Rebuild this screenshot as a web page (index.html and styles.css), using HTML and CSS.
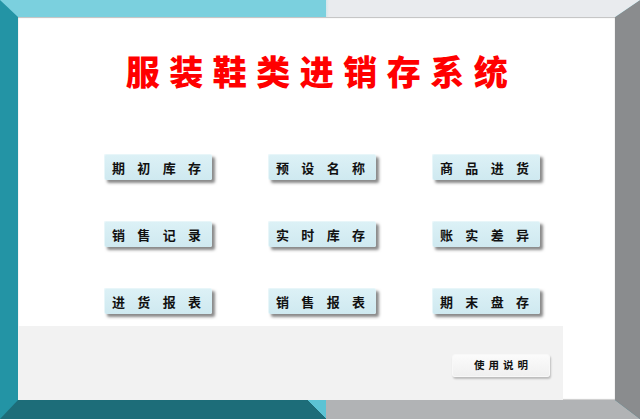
FILE: index.html
```html
<!DOCTYPE html>
<html lang="zh">
<head>
<meta charset="utf-8">
<title>服装鞋类进销存系统</title>
<link rel="stylesheet" href="styles.css">
</head>
<body>
<div class="frame">
  <div class="panel">
    <h1 class="title">服装鞋类进销存系统</h1>
    <div class="menu">
      <button class="btn"><span>期</span><span>初</span><span>库</span><span>存</span></button>
      <button class="btn"><span>预</span><span>设</span><span>名</span><span>称</span></button>
      <button class="btn"><span>商</span><span>品</span><span>进</span><span>货</span></button>
      <button class="btn"><span>销</span><span>售</span><span>记</span><span>录</span></button>
      <button class="btn"><span>实</span><span>时</span><span>库</span><span>存</span></button>
      <button class="btn"><span>账</span><span>实</span><span>差</span><span>异</span></button>
      <button class="btn"><span>进</span><span>货</span><span>报</span><span>表</span></button>
      <button class="btn"><span>销</span><span>售</span><span>报</span><span>表</span></button>
      <button class="btn"><span>期</span><span>末</span><span>盘</span><span>存</span></button>
    </div>
    <div class="footer">
      <button class="help">使用说明</button>
    </div>
  </div>
</div>
</body>
</html>
```
FILE: styles.css
```css
html, body {
  margin: 0;
  padding: 0;
  width: 640px;
  height: 419px;
  overflow: hidden;
  background: #ffffff;
}

.frame {
  position: relative;
  width: 640px;
  height: 419px;
  box-sizing: border-box;
  border-style: solid;
  border-width: 17px 25px 19px 18px;
  border-color: #7bd0de #8a8c8e #1d6d79 #2394a5;
}

/* right half of the top bar */
.frame::before {
  content: "";
  position: absolute;
  top: -17px;
  left: 308px;
  right: -25px;
  height: 17px;
  background: linear-gradient(to right, #d4e6ea 0, #e9ebee 3px, #e9ebee 100%);
  clip-path: polygon(0 0, 100% 0, calc(100% - 25px) 100%, 0 100%);
}

/* right half of the bottom bar, with the small cyan wedge */
.frame::after {
  content: "";
  position: absolute;
  bottom: -19px;
  left: 290px;
  right: -25px;
  height: 19px;
  background:
    linear-gradient(to bottom left, #5cc3d4 50%, transparent 50%) 0 0 / 18px 19px no-repeat,
    linear-gradient(to right, transparent 18px, #b1b3b5 18px);
  clip-path: polygon(0 0, calc(100% - 25px) 0, 100% 100%, 0 100%);
}

.panel {
  display: flex;
  flex-direction: column;
  height: 100%;
  background: #ffffff;
  box-shadow: inset 0 1px 1px rgba(0, 0, 0, 0.25), inset 0 -1px 1px rgba(0, 0, 0, 0.2);
  font-family: "Noto Sans CJK SC", "Noto Sans", sans-serif;
}

.title {
  margin: 37px 0 0 0;
  padding-left: 10px;
  font-size: 34px;
  line-height: 34px;
  font-weight: 900;
  color: #ff0000;
  text-align: center;
  letter-spacing: 9.5px;
}

.menu {
  display: grid;
  grid-template-columns: repeat(3, 108px);
  grid-auto-rows: 26px;
  column-gap: 56px;
  row-gap: 41px;
  margin-top: 66px;
  padding-left: 86px;
}

.btn {
  display: flex;
  justify-content: space-between;
  align-items: center;
  margin: 0;
  padding: 0 11px 0 7px;
  border: none;
  border-top: 1px solid #e8f6f9;
  border-left: 1px solid #e8f6f9;
  border-radius: 2px;
  background: linear-gradient(#dcf1f6, #cfe9f0);
  box-shadow: 3px 3px 3px rgba(40, 40, 40, 0.55);
  font-family: "Noto Sans CJK SC", sans-serif;
  font-size: 13px;
  font-weight: 700;
  color: #111111;
  line-height: 1;
}

.footer {
  display: flex;
  justify-content: flex-end;
  align-items: flex-start;
  margin-top: auto;
  width: 545px;
  height: 74px;
  box-sizing: border-box;
  padding: 28px 13px 0 0;
  background: #f2f2f2;
}

.help {
  width: 98px;
  height: 23px;
  margin: 0;
  padding: 0 0 0 4px;
  border: 1px solid #f8f8f8;
  border-radius: 3px;
  background: linear-gradient(#fbfbfb, #f0f0f0);
  box-shadow: 1px 2px 2px rgba(0, 0, 0, 0.22);
  font-family: "Noto Sans CJK SC", sans-serif;
  font-size: 10.5px;
  font-weight: 700;
  letter-spacing: 4px;
  color: #111111;
  line-height: 1;
}
```
